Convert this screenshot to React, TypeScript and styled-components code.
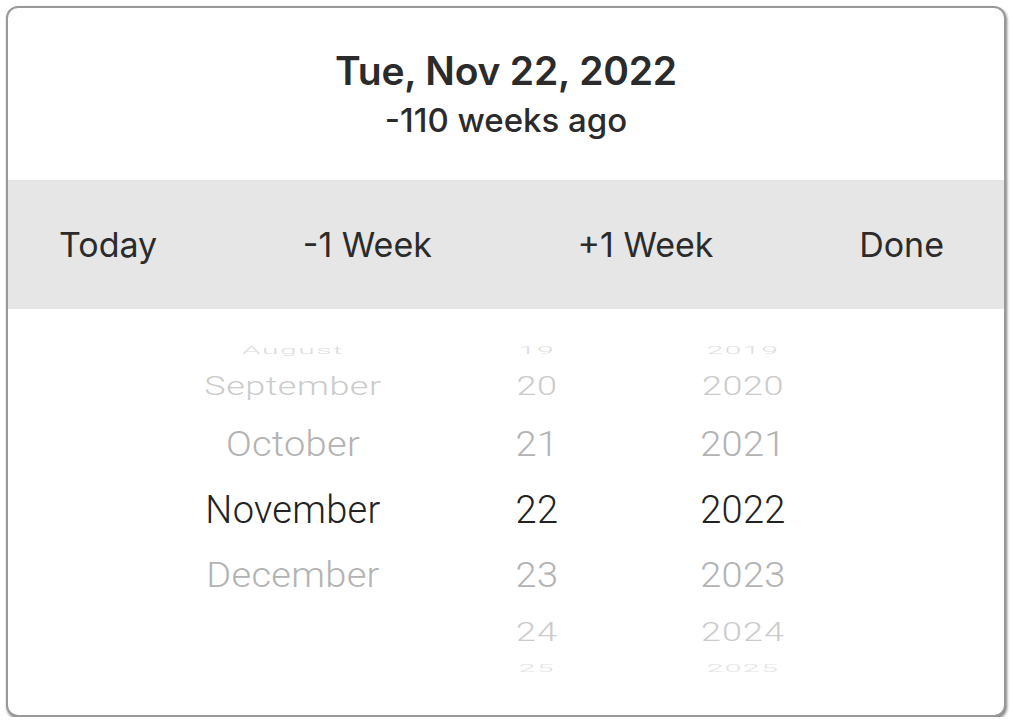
import styled, { createGlobalStyle } from "styled-components";

const GlobalStyle = createGlobalStyle`
  html, body {
    margin: 0;
    padding: 0;
    background: #ffffff;
  }
  body {
    font-family: Inter, "Noto Sans", sans-serif;
  }
`;

type WheelRow = {
  height: number;
  scale: number;
  size: number;
  spacing: number;
  color: string;
  month: string;
  day: string;
  year: string;
};

// rows of the picker wheel, squashed more the farther they sit from the middle
const rows: WheelRow[] = [
  { height: 26, scale: 0.35, size: 30, spacing: 1.5, color: "#dedede", month: "August", day: "19", year: "2019" },
  { height: 48, scale: 0.7, size: 36, spacing: 0.5, color: "#cbcbcb", month: "September", day: "20", year: "2020" },
  { height: 66, scale: 0.92, size: 38, spacing: 0.3, color: "#b3b3b3", month: "October", day: "21", year: "2021" },
  { height: 66, scale: 1, size: 38, spacing: 0.3, color: "#222222", month: "November", day: "22", year: "2022" },
  { height: 64, scale: 0.92, size: 38, spacing: 0.3, color: "#b3b3b3", month: "December", day: "23", year: "2023" },
  { height: 52, scale: 0.7, size: 36, spacing: 1, color: "#cccccc", month: "", day: "24", year: "2024" },
  { height: 18, scale: 0.35, size: 30, spacing: 1.5, color: "#e3e3e3", month: "", day: "25", year: "2025" },
];

const App = (): JSX.Element => {
  return (
    <>
      <GlobalStyle />
      <Card>
        <Header>
          <Title>Tue, Nov 22, 2022</Title>
          <SubTitle>-110 weeks ago</SubTitle>
        </Header>
        <Toolbar>
          <ToolButton>Today</ToolButton>
          <ToolButton>-1 Week</ToolButton>
          <ToolButton>+1 Week</ToolButton>
          <ToolButton>Done</ToolButton>
        </Toolbar>
        <Wheel>
          {rows.map((row) => (
            <Row key={row.day} $height={row.height}>
              <Cell $scale={row.scale} $size={row.size} $spacing={row.spacing} $color={row.color}>
                {row.month}
              </Cell>
              <Cell $scale={row.scale} $size={row.size} $spacing={row.spacing} $color={row.color}>
                {row.day}
              </Cell>
              <Cell $scale={row.scale} $size={row.size} $spacing={row.spacing} $color={row.color}>
                {row.year}
              </Cell>
            </Row>
          ))}
        </Wheel>
      </Card>
    </>
  );
};

const Card = styled.div`
  box-sizing: border-box;
  width: 1000px;
  height: 711px;
  margin: 6px 0 0 6px;
  border: 2px solid #999999;
  border-radius: 12px;
  background: #ffffff;
  box-shadow: 1px 2px 3px rgba(0, 0, 0, 0.5);
  overflow: hidden;
  display: flex;
  flex-direction: column;
`;

const Header = styled.div`
  height: 172px;
  display: flex;
  flex-direction: column;
  align-items: center;
  padding-top: 38px;
  box-sizing: border-box;
`;

const Title = styled.div`
  font-size: 39px;
  font-weight: 600;
  line-height: 50px;
  color: #2b2b2b;
  letter-spacing: -0.2px;
`;

const SubTitle = styled.div`
  font-size: 33px;
  font-weight: 500;
  line-height: 42px;
  margin-top: 3px;
  color: #2b2b2b;
`;

const Toolbar = styled.div`
  height: 129px;
  background: #e6e6e6;
  display: flex;
  align-items: center;
  justify-content: space-between;
  padding: 0 60px 0 51px;
`;

const ToolButton = styled.div`
  font-size: 34px;
  font-weight: 400;
  color: #2b2b2b;
  cursor: pointer;
`;

const Wheel = styled.div`
  padding-top: 28px;
  padding-left: 165px;
`;

const Row = styled.div<{ $height: number }>`
  height: ${(p) => p.$height}px;
  display: grid;
  grid-template-columns: 240px 168px 164px;
  grid-template-rows: minmax(0, 1fr);
  column-gap: 40px;
  align-items: center;
`;

const Cell = styled.div<{ $scale: number; $size: number; $spacing: number; $color: string }>`
  text-align: center;
  font-family: Roboto, "Noto Sans", sans-serif;
  font-weight: 300;
  font-size: ${(p) => p.$size}px;
  line-height: 1;
  color: ${(p) => p.$color};
  letter-spacing: ${(p) => p.$spacing}px;
  transform: scaleY(${(p) => p.$scale});
  white-space: nowrap;
`;

export default App;
